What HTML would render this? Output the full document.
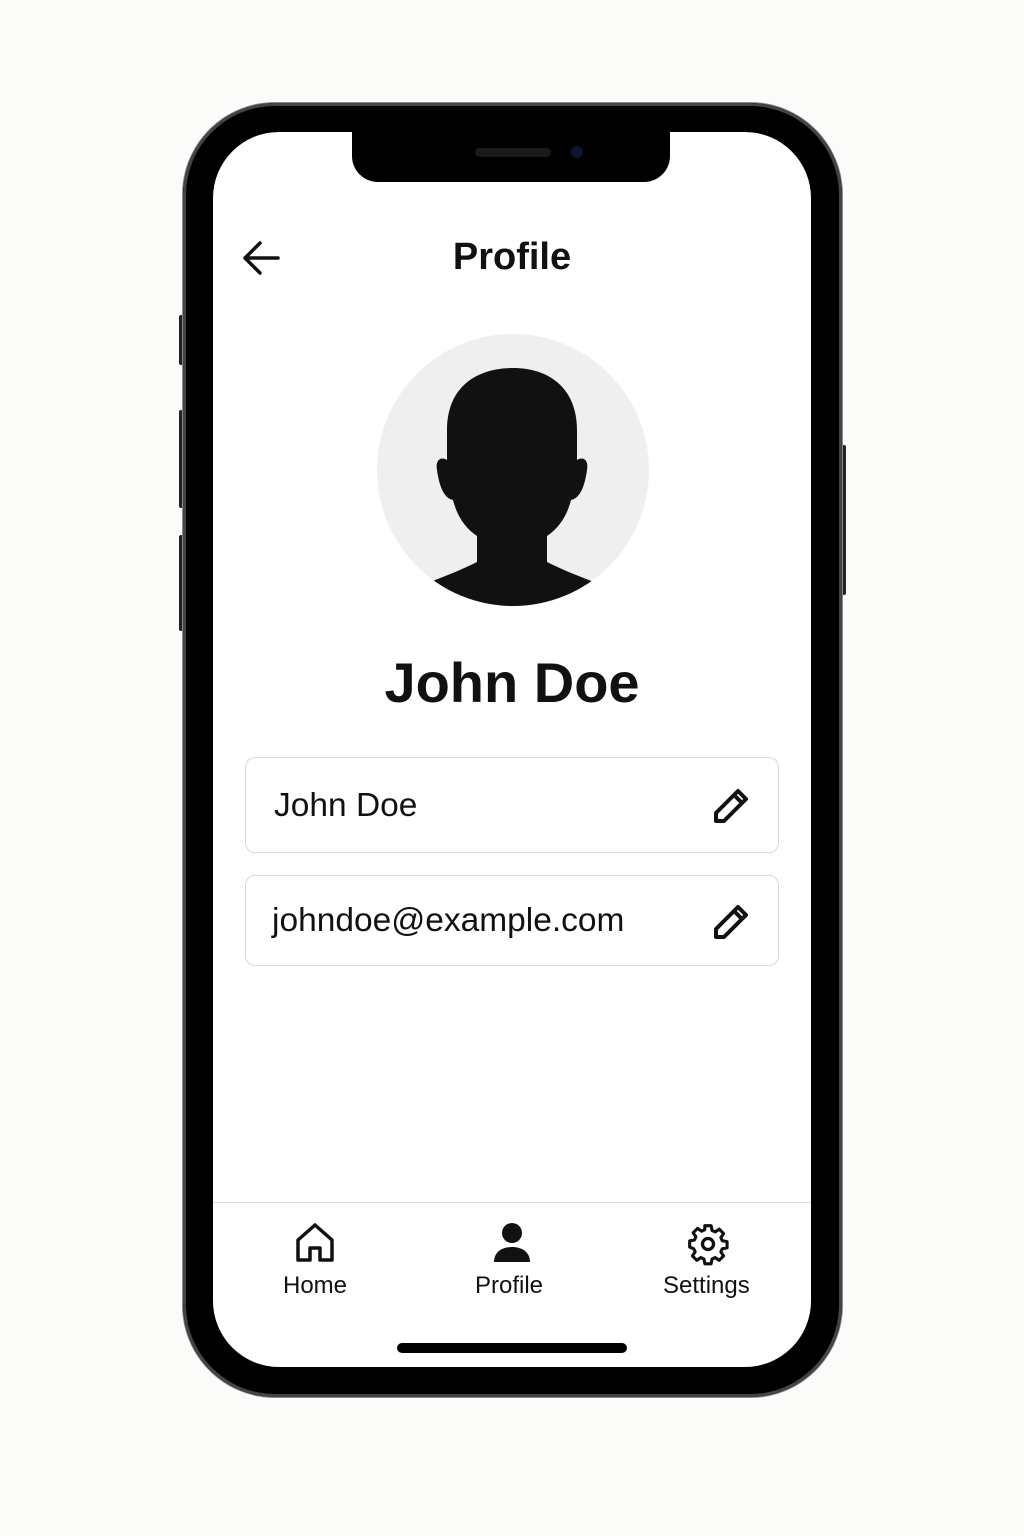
<!DOCTYPE html>
<html><head><meta charset="utf-8"><style>
body{margin:0;width:1024px;height:1536px;background:#fbfbfa;position:relative;overflow:hidden;font-family:"Liberation Sans",sans-serif;}
.phone{position:absolute;left:183px;top:103px;width:659px;height:1294px;background:#000;border-radius:92px;box-shadow:0 0 0 1px #888,inset 0 0 0 3px #444,inset 0 0 0 5px #000;}
.screen{position:absolute;left:213px;top:132px;width:598px;height:1235px;background:#fff;border-radius:66px;overflow:hidden;}
.notch{position:absolute;left:352px;top:120px;width:318px;height:62px;background:#000;border-radius:0 0 26px 26px;}
.btn{position:absolute;background:#222;width:4px;border-radius:2px;}
.t{position:absolute;color:#111;white-space:nowrap;}
.field{position:absolute;left:245px;width:532px;border:1px solid #d8d8d8;border-radius:10px;background:#fff;}
</style></head><body>
<div class="btn" style="left:179px;top:315px;height:50px"></div>
<div class="btn" style="left:179px;top:410px;height:98px"></div>
<div class="btn" style="left:179px;top:535px;height:96px"></div>
<div class="btn" style="left:842px;top:445px;height:150px"></div>
<div class="phone"></div>
<div class="screen"></div>
<div class="notch"></div>
<div style="position:absolute;left:475px;top:148px;width:76px;height:9px;background:#1a1a1a;border-radius:5px"></div>
<div style="position:absolute;left:571px;top:146px;width:12px;height:12px;background:#0a1530;border-radius:50%"></div>
<svg style="position:absolute;left:240px;top:238px" width="44" height="40" viewBox="0 0 44 40"><path d="M38 20H6M20 5L5 20l15 15" fill="none" stroke="#111" stroke-width="3.5" stroke-linecap="round" stroke-linejoin="round"/></svg>
<div class="t" style="left:0;width:1024px;text-align:center;top:236px;font-size:38px;font-weight:bold">Profile</div>
<svg style="position:absolute;left:376px;top:332px" width="274" height="276" viewBox="0 0 274 276">
<defs><clipPath id="c"><circle cx="137" cy="138" r="136"/></clipPath></defs>
<circle cx="137" cy="138" r="136" fill="#efefef"/>
<g clip-path="url(#c)" fill="#111">
<path d="M137 36c-40 0-66 22-66 62v30c-6-4-12 0-10 10 2 14 6 28 16 30 4 16 12 28 24 36v26c-24 12-52 22-70 28l20 40h170l20-40c-18-6-46-16-70-28v-26c12-8 20-20 24-36 10-2 14-16 16-30 2-10-4-14-10-10V98c0-40-26-62-64-62z"/>
</g></svg>
<div class="t" style="left:0;width:1024px;text-align:center;top:650px;font-size:56px;font-weight:bold">John Doe</div>
<div class="field" style="top:757px;height:94px"></div>
<div class="field" style="top:875px;height:89px"></div>
<div class="t" style="left:274px;top:787px;font-size:33.5px">John Doe</div>
<div class="t" style="left:272px;top:902px;font-size:33.5px">johndoe@example.com</div>
<svg style="position:absolute;left:710px;top:785px" width="42" height="42" viewBox="0 0 42 42"><path d="M28 6l8 8L14 36H6v-8z M24 10l8 8" fill="none" stroke="#111" stroke-width="4" stroke-linejoin="round"/></svg>
<svg style="position:absolute;left:710px;top:901px" width="42" height="42" viewBox="0 0 42 42"><path d="M28 6l8 8L14 36H6v-8z M24 10l8 8" fill="none" stroke="#111" stroke-width="4" stroke-linejoin="round"/></svg>
<div style="position:absolute;left:213px;top:1202px;width:598px;height:1px;background:#ddd"></div>
<svg style="position:absolute;left:294px;top:1222px" width="42" height="42" viewBox="0 0 42 42"><path d="M4 18L21 3l17 15v20H26V26h-10v12H4z" fill="none" stroke="#111" stroke-width="3.5" stroke-linejoin="round"/></svg>
<svg style="position:absolute;left:490px;top:1220px" width="44" height="44" viewBox="0 0 44 44"><circle cx="22" cy="13" r="10" fill="#111"/><path d="M4 42c0-10 8-15 18-15s18 5 18 15z" fill="#111"/></svg>
<svg style="position:absolute;left:686px;top:1222px" width="44" height="44" viewBox="0 0 24 24"><path d="M10.3 2h3.4l.5 2.6 1.7.8 2.2-1.5 2.4 2.4-1.5 2.2.8 1.7 2.6.5v3.4l-2.6.5-.8 1.7 1.5 2.2-2.4 2.4-2.2-1.5-1.7.8-.5 2.6h-3.4l-.5-2.6-1.7-.8-2.2 1.5-2.4-2.4 1.5-2.2-.8-1.7L2 13.7v-3.4l2.6-.5.8-1.7-1.5-2.2 2.4-2.4 2.2 1.5 1.7-.8z" fill="none" stroke="#111" stroke-width="1.7" stroke-linejoin="round"/><circle cx="12" cy="12" r="3" fill="none" stroke="#111" stroke-width="1.8"/></svg>
<div class="t" style="left:283px;top:1272px;font-size:24px">Home</div>
<div class="t" style="left:475px;top:1272px;font-size:24px">Profile</div>
<div class="t" style="left:663px;top:1272px;font-size:24px">Settings</div>
<div style="position:absolute;left:397px;top:1343px;width:230px;height:10px;background:#000;border-radius:5px"></div>
</body></html>
